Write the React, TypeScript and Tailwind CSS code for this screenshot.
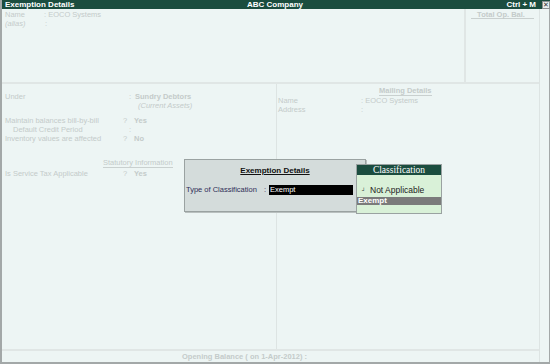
import React from 'react';

const faded = 'text-[#c4cbca]';

const Row: React.FC<{ top: string; children: React.ReactNode }> = ({ top, children }) => (
  <div className={`flex items-center h-[9px] ${top}`}>{children}</div>
);

const App: React.FC = () => {
  return (
    <div
      className="relative w-[550px] h-[364px] bg-[#edf5f4] flex flex-col border-l-2 border-b-2 border-[#a3a8a8] overflow-hidden"
      style={{ fontFamily: '"Liberation Sans", Arial, sans-serif' }}
    >
      {/* title bar */}
      <div className="flex items-center h-[9px] bg-[#1b4d3f] text-white text-[8px] font-bold leading-none -ml-[2px]">
        <span className="pl-[5px] w-[247px]">Exemption Details</span>
        <span className="flex-1">ABC Company</span>
        <span className="pr-[6px]">Ctrl + M</span>
        <span className="w-[8px] h-[8px] bg-[#e8eeee] border border-[#8a9090] flex items-center justify-center text-[7px] text-[#333] font-normal">
          ✕
        </span>
      </div>

      <div className="flex flex-1">
        {/* main area */}
        <div className="flex flex-col flex-1 border-r border-[#dde4e3]">
          {/* top section */}
          <div className="flex h-[75px] border-b-2 border-[#e0e6e5]">
            <div className={`flex-1 pl-[3px] pt-[1px] text-[7.5px] ${faded}`}>
              <Row top="mt-0">
                <span className="w-[39px]">Name</span>
                <span>: EOCO Systems</span>
              </Row>
              <Row top="mt-0">
                <span className="w-[40px] italic">(alias)</span>
                <span>:</span>
              </Row>
            </div>
            <div className="w-[75px] border-l-2 border-[#e0e6e5] flex justify-center pt-[1px]">
              <div className={`w-[63px] h-[9px] border-b border-[#c9d0cf] text-center text-[7.5px] font-bold leading-[9px] pr-[3px] ${faded}`}>
                Total Op. Bal.
              </div>
            </div>
          </div>

          {/* lower section */}
          <div className="flex flex-1 text-[7.5px]">
            <div className={`w-[275px] border-r border-[#dde4e3] pl-[3px] ${faded}`}>
              <Row top="mt-[8px]">
                <span className="w-[124px]">Under</span>
                <span className="w-[6px]">:</span>
                <span className="font-bold">Sundry Debtors</span>
              </Row>
              <Row top="mt-0">
                <span className="pl-[133px] italic">(Current Assets)</span>
              </Row>
              <Row top="mt-[6px]">
                <span className="w-[118px]">Maintain balances bill-by-bill</span>
                <span className="w-[11px]">?</span>
                <span className="font-bold">Yes</span>
              </Row>
              <Row top="mt-0">
                <span className="w-[124px] pl-[8px]">Default Credit Period</span>
                <span>:</span>
              </Row>
              <Row top="mt-0">
                <span className="w-[118px]">Inventory values are affected</span>
                <span className="w-[11px]">?</span>
                <span className="font-bold">No</span>
              </Row>
              <Row top="mt-[16px]">
                <span className="ml-[98px] border-b border-[#c9d0cf] leading-[8px]">Statutory Information</span>
              </Row>
              <Row top="mt-[1px]">
                <span className="w-[118px]">Is Service Tax Applicable</span>
                <span className="w-[11px]">?</span>
                <span className="font-bold">Yes</span>
              </Row>
            </div>
            <div className={`flex-1 pl-[1px] ${faded}`}>
              <Row top="mt-[3px]">
                <span className="ml-[101px] font-bold border-b border-[#c9d0cf] leading-[8px]">Mailing Details</span>
              </Row>
              <Row top="mt-0">
                <span className="w-[83px]">Name</span>
                <span>: EOCO Systems</span>
              </Row>
              <Row top="mt-0">
                <span className="w-[83px]">Address</span>
                <span>:</span>
              </Row>
            </div>
          </div>

          {/* footer */}
          <div className="h-[13px] border-t-2 border-[#e0e6e5] flex items-center">
            <span className={`ml-[180px] text-[7.5px] font-bold ${faded}`}>
              Opening Balance ( on 1-Apr-2012) :
            </span>
          </div>
        </div>
        {/* right strip */}
        <div className="w-[10px] border-r border-[#a3a8a8]" />
      </div>

      {/* Exemption Details dialog */}
      <div className="absolute left-[182px] top-[159px] w-[182px] h-[53px] bg-[#d4dcdb] border border-[#9aa2a1] shadow-[1px_1px_0_#b9c0bf]">
        <div className="flex justify-center mt-[6px]">
          <span className="text-[8px] font-bold text-[#111] underline leading-[9px]">Exemption Details</span>
        </div>
        <div className="flex items-center mt-[9px] pl-[1px] text-[7.5px] text-[#2e2e58]">
          <span className="w-[78px]">Type of Classification</span>
          <span className="w-[5px]">:</span>
          <span className="w-[84px] h-[10px] bg-black text-white leading-[10px] pl-[1px]">Exempt</span>
        </div>
      </div>

      {/* Classification list */}
      <div className="absolute left-[354px] top-[164px] w-[86px] h-[50px] bg-[#d9f1d8] border border-[#9aa2a1] flex flex-col">
        <div
          className="h-[10px] bg-[#1b4d3f] text-white text-[9.5px] leading-[10px] text-center"
          style={{ fontFamily: '"Liberation Serif", "Times New Roman", serif' }}
        >
          Classification
        </div>
        <div className="flex items-center mt-[11px] h-[9px] text-[8.5px] text-[#1c1c1c]">
          <span className="w-[13px] pl-[5px] text-[5px] leading-none">┘</span>
          <span>Not Applicable</span>
        </div>
        <div className="mt-[2px] h-[8px] bg-[#7b7b7b] text-white text-[8px] font-bold leading-[8px] pl-[1px]">
          Exempt
        </div>
      </div>
    </div>
  );
};

export default App;
